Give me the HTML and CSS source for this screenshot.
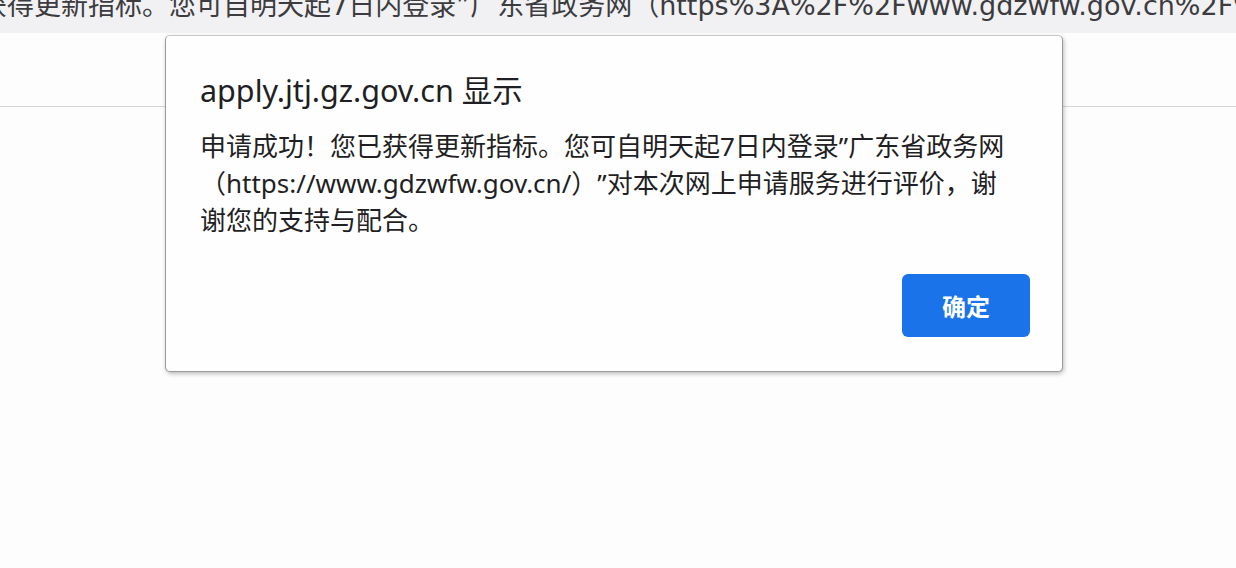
FILE: index.html
```html
<!DOCTYPE html>
<html lang="zh-CN">
<head>
<meta charset="utf-8">
<title>apply.jtj.gz.gov.cn</title>
<link rel="stylesheet" href="styles.css">
</head>
<body>
<div class="urlbar"><div class="urltext">获得更新指标。您可自明天起7日内登录”广东省政务网（https%3A%2F%2Fwww.gdzwfw.gov.cn%2F%2F</div></div>
<div class="toolbar"></div>
<div class="page"></div>
<div class="dialog" role="alertdialog">
  <div class="title">apply.jtj.gz.gov.cn 显示</div>
  <div class="message">申请成功！您已获得更新指标。您可自明天起7日内登录”广东省政务网（https://www.gdzwfw.gov.cn/）”对本次网上申请服务进行评价，谢谢您的支持与配合。</div>
  <div class="actions"><button class="ok">确定</button></div>
</div>
</body>
</html>
```
FILE: styles.css
```css
html, body {
  margin: 0;
  padding: 0;
  background: #fdfdfe;
  height: 100%;
  overflow: hidden;
  font-family: "Noto Sans", "Noto Sans CJK SC", sans-serif;
  color: #202124;
  text-spacing-trim: space-all;
}
.urlbar {
  height: 33px;
  background: #f1f1f3;
  overflow: hidden;
}
.urltext {
  white-space: nowrap;
  font-family: "DejaVu Sans", "Noto Sans CJK SC", sans-serif;
  font-size: 27px;
  line-height: 27px;
  margin-top: -8px;
  margin-left: -20px;
  color: #3c3c40;
}
.toolbar {
  height: 73px;
  border-bottom: 1px solid #d6d6d8;
  background: #fdfdfe;
}
.dialog {
  position: absolute;
  left: 165px;
  top: 35px;
  width: 898px;
  height: 337px;
  box-sizing: border-box;
  background: #fefefe;
  border: 1px solid #9a9a9a;
  border-top-color: #c8c8c8;
  border-radius: 5px;
  box-shadow: 1px 2px 4px rgba(0,0,0,0.25);
  padding: 36px 32px 0 34px;
  display: flex;
  flex-direction: column;
}
.title {
  font-size: 30.5px;
  line-height: 36px;
  color: #1f1f24;
}
.message {
  margin-top: 20px;
  padding-right: 14px;
  font-size: 26px;
  line-height: 37px;
  color: #1f1f24;
}
.actions {
  display: flex;
  justify-content: flex-end;
  margin-top: 35px;
}
.ok {
  width: 128px;
  height: 63px;
  border: none;
  border-radius: 6px;
  background: #1a73e8;
  color: #ffffff;
  font-family: "Noto Sans CJK SC", sans-serif;
  font-size: 24px;
  font-weight: 700;
}
```
